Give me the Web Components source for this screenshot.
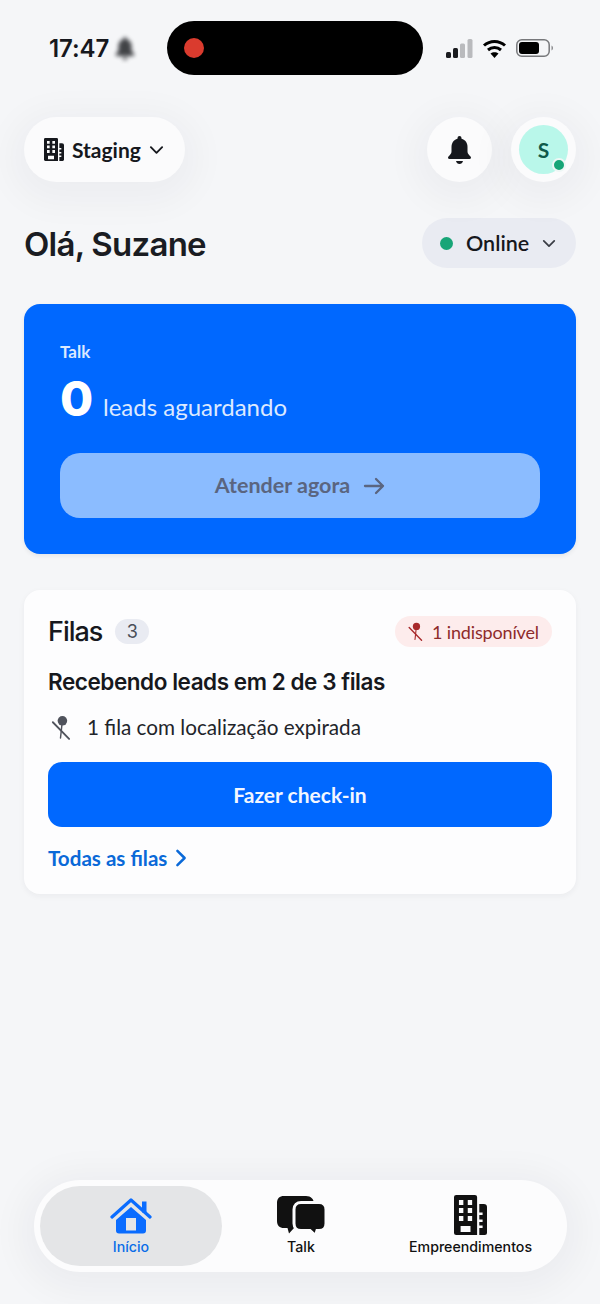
<!DOCTYPE html>
<html lang="pt-BR">
<head>
<meta charset="utf-8">
<title>Início</title>
<style>
  html, body { margin: 0; padding: 0; }
  body {
    width: 600px;
    height: 1304px;
    overflow: hidden;
    background: #f5f6f8;
    font-family: "Lato", "Liberation Sans", sans-serif;
    color: #16181d;
    display: flex;
    flex-direction: column;
  }
  bottom-nav { margin-top: auto; }
</style>
</head>
<body>
<status-bar></status-bar>
<top-bar></top-bar>
<greeting-row></greeting-row>
<talk-card></talk-card>
<queue-card></queue-card>
<bottom-nav></bottom-nav>

<script>
const ICONS = {
  building: `<svg viewBox="0 0 30 40" width="100%" height="100%" preserveAspectRatio="none"><path fill="currentColor" fill-rule="evenodd" d="M2 0h17a2 2 0 0 1 2 2v38H2a2 2 0 0 1-2-2V2a2 2 0 0 1 2-2zM4.500 5v5h4V5zm8 0v5h4V5zm-8 8v5h4v-5zm8 0v5h4v-5zm-8 8v5h4v-5zm8 0v5h4v-5zM6 31v6h9v-6zM23 9h4a3 3 0 0 1 3 3v26a2 2 0 0 1-2 2h-5v-7h3v-2.500h-3V27h3v-2.500h-3V20h3v-2.500h-3z"/></svg>`,
  chevron: `<svg viewBox="0 0 16 10" width="100%" height="100%"><path fill="none" stroke="currentColor" stroke-width="2" stroke-linecap="round" stroke-linejoin="round" d="M2 2l6 6 6-6"/></svg>`,
  bell: `<svg viewBox="0 0 24 28" width="100%" height="100%"><path fill="currentColor" d="M12 0a2 2 0 0 1 2 2v.700C18 3.700 20 7 20 11v4.500c0 2 1.300 3.300 3 5 .9.900.6 2.500-1 2.500H2c-1.600 0-1.900-1.600-1-2.500 1.700-1.700 3-3 3-5V11c0-4 2-7.300 6-8.300V2a2 2 0 0 1 2-2zM8.500 25h7c-.4 1.800-1.800 3-3.500 3s-3.100-1.200-3.500-3z"/></svg>`,
  arrow: `<svg viewBox="0 0 22 18" width="100%" height="100%"><path fill="none" stroke="currentColor" stroke-width="2.300" stroke-linecap="round" stroke-linejoin="round" d="M2 9h18M13 2l7 7-7 7"/></svg>`,
  pinOff: `<svg viewBox="0 0 22 26" width="100%" height="100%"><circle cx="13" cy="6" r="5" fill="currentColor"/><path fill="none" stroke="currentColor" stroke-width="1.500" stroke-linecap="round" d="M12.500 10 11 24"/><path fill="none" stroke="currentColor" stroke-width="1.900" stroke-linecap="round" d="M3 7.500 20 25"/></svg>`,
  chevronRight: `<svg viewBox="0 0 12 20" width="100%" height="100%"><path fill="none" stroke="currentColor" stroke-width="2.800" stroke-linecap="round" stroke-linejoin="round" d="M2 2l8 8-8 8"/></svg>`,
  home: `<svg viewBox="0 0 42 36" width="100%" height="100%"><path fill="currentColor" fill-rule="evenodd" d="M21 9 36 22v10.500a3 3 0 0 1-3 3H9a3 3 0 0 1-3-3V22zM16 20v12.500h10V20z"/><path fill="none" stroke="currentColor" stroke-width="3.200" stroke-linecap="round" stroke-linejoin="round" d="M2 19 21 2l19 17"/><path fill="currentColor" d="M32 3.500h4.500v11H32z"/></svg>`,
  chat: `<svg viewBox="0 0 50 40" width="100%" height="100%"><path fill="currentColor" d="M8 1h22c5 0 8 3 8 8v18c0 4-3 6-8 6H18l-5 5.500-1.500-5.500H8c-4.500 0-7-2.500-7-7V8c0-4.500 2.500-7 7-7z"/><path fill="currentColor" stroke="#fcfcfd" stroke-width="3" d="M25 7.500h18c4 0 7 2.500 7 7v14c0 4.500-3 7-7 7h-2l-1.500 5-5.500-5H25c-4 0-7-2.500-7-7v-14c0-4.500 3-7 7-7z"/></svg>`
};

function define(name, css, html) {
  customElements.define(name, class extends HTMLElement {
    connectedCallback() {
      if (this.shadowRoot) return;
      this.attachShadow({ mode: 'open' }).innerHTML = `<style>${css}</style>${html}`;
    }
  });
}

// simple wrapper so icons size from the host box
customElements.define('app-icon', class extends HTMLElement {
  connectedCallback() {
    if (this.shadowRoot) return;
    const w = this.getAttribute('w') || 20, h = this.getAttribute('h') || 20;
    this.attachShadow({ mode: 'open' }).innerHTML = `
      <style>:host{display:block;flex:none;width:${w}px;height:${h}px;line-height:0}</style>
      ${ICONS[this.getAttribute('name')]}`;
  }
});

define('status-bar', `
  :host{display:flex;align-items:center;height:54px;margin-top:21px;padding:0 47px 0 49px;box-sizing:border-box;color:#16181d}
  .time{font:600 24px/1 "Inter",sans-serif;letter-spacing:-.1px;width:59px;padding-top:1px}
  .muted{margin-left:6px;width:22px;height:23px;color:#222428;filter:blur(2px);opacity:.85}
  .island{margin-left:31px;width:256px;height:54px;border-radius:27px;background:#000;display:flex;align-items:center;padding-left:17px;box-sizing:border-box}
  .rec{width:20px;height:20px;border-radius:50%;background:#da3b2e}
  .right{margin-left:auto;display:flex;align-items:center;gap:9px}
`, `
  <span class="time">17:47</span>
  <app-icon class="muted" name="bell" w="22" h="23"></app-icon>
  <div class="island"><div class="rec"></div></div>
  <div class="right">
    <svg width="27" height="19" viewBox="0 0 27 19"><rect x="0" y="13" width="5" height="6" rx="1.500" fill="#1b1c20"/><rect x="7" y="9" width="5" height="10" rx="1.500" fill="#1b1c20"/><rect x="14" y="4.500" width="5" height="14.500" rx="1.500" fill="#b9babd"/><rect x="21.500" y="0" width="5" height="19" rx="1.500" fill="#b9babd"/></svg>
    <svg width="25" height="19" viewBox="0 0 25 19"><g fill="none" stroke="#000" stroke-width="3"><path d="M2 6.500c6-5.500 15-5.500 21 0"/><path d="M6 11c3.800-3.300 9.200-3.300 13 0"/></g><path d="M12.500 19l-4-4.500c2.300-1.800 5.700-1.800 8 0z"/></svg>
    <svg width="37" height="18" viewBox="0 0 37 18"><rect x=".8" y=".8" width="32.400" height="16.400" rx="5" fill="none" stroke="#77787b" stroke-width="1.500"/><rect x="3" y="3" width="20" height="12" rx="3" fill="#000"/><path d="M35.500 6.500c1 .6 1.500 1.500 1.500 2.500s-.5 1.900-1.500 2.500z" fill="#8a8b8e"/></svg>
  </div>
`);

define('top-bar', `
  :host{display:flex;align-items:center;margin-top:42px;padding:0 24px;height:65px}
  .glow{box-shadow:0 8px 34px 14px rgba(30,34,50,.035);background:#fbfbfc}
  .org{display:flex;align-items:center;width:161px;height:65px;border-radius:33px;box-sizing:border-box;padding-left:20px;color:#16181d}
  .org span{font:700 21px/1 "Lato",sans-serif;margin-left:8px}
  .org app-icon:last-child{margin-left:8px}
  .spacer{flex:1}
  .round{width:65px;height:65px;border-radius:50%;display:flex;align-items:center;justify-content:center;position:relative}
  .round + .round{margin-left:19px}
  .avatar{width:49px;height:49px;border-radius:50%;background:#b9f7ea;color:#0f5a4b;display:flex;align-items:center;justify-content:center;font:700 21px/1 "Lato",sans-serif}
  .dot{position:absolute;right:10px;bottom:10px;width:10px;height:10px;border-radius:50%;background:#17a577;border:2px solid #eef7f5}
`, `
  <div class="org glow"><app-icon name="building" w="20" h="23"></app-icon><span>Staging</span><app-icon name="chevron" w="15" h="10"></app-icon></div>
  <div class="spacer"></div>
  <div class="round glow"><app-icon name="bell" w="25" h="28"></app-icon></div>
  <div class="round glow"><div class="avatar">S</div><div class="dot"></div></div>
`);

define('greeting-row', `
  :host{display:flex;align-items:center;justify-content:space-between;margin-top:36px;padding:0 24px;height:50px}
  h1{margin:2px 0 0;font:600 33px/1 "Inter",sans-serif;letter-spacing:-.75px;color:#1a1c22}
  .status{display:flex;align-items:center;width:154px;height:50px;border-radius:25px;background:#e9ebf2;box-sizing:border-box;padding-left:18px}
  .dot{width:13px;height:13px;border-radius:50%;background:#17a577}
  .status span{font:600 21.500px/1 "Lato",sans-serif;margin:1px 0 0 13px;color:#16181d}
  .status app-icon{margin-left:auto;margin-right:20px;color:#3a3d45}
`, `
  <h1>Olá, Suzane</h1>
  <div class="status"><div class="dot"></div><span>Online</span><app-icon name="chevron" w="14" h="9"></app-icon></div>
`);

define('talk-card', `
  :host{display:block;margin:36px 24px 0;height:250px;box-sizing:border-box;padding:35px 36px 0;background:#0068ff;border-radius:16px;color:#fff;box-shadow:0 2px 4px rgba(30,34,50,.08)}
  .label{font:700 17px/1 "Lato",sans-serif;color:#dbe9ff;height:24px;display:flex;align-items:center}
  .count{display:flex;align-items:baseline;margin-top:9px;height:54px}
  .count b{font:800 48px/54px "Inter",sans-serif;width:43px}
  .count span{font:400 24px/1 "Lato",sans-serif;color:#dce9ff}
  .cta{margin-top:27px;height:65px;border-radius:20px;background:#8bbcff;color:#5a6580;display:flex;align-items:center;justify-content:center;gap:13px;font:700 21.500px/1 "Lato",sans-serif}
`, `
  <div class="label">Talk</div>
  <div class="count"><b>0</b><span>leads aguardando</span></div>
  <div class="cta">Atender agora <app-icon name="arrow" w="22" h="18"></app-icon></div>
`);

define('queue-card', `
  :host{display:block;margin:36px 24px 0;height:304px;box-sizing:border-box;padding:25px 24px 0;background:#fdfdfe;border-radius:16px;box-shadow:0 2px 6px rgba(30,34,50,.05)}
  .head{display:flex;align-items:center;height:33px}
  h2{margin:0;font:500 27px/1 "Inter",sans-serif;letter-spacing:-1px;color:#16181d}
  .chip{margin-left:13px;width:34px;height:25px;border-radius:13px;background:#e9ebf2;color:#4a4e58;display:flex;align-items:center;justify-content:center;font:400 18px/1 "Inter",sans-serif}
  .badge{margin-left:auto;display:flex;align-items:center;gap:9px;height:31px;width:157px;box-sizing:border-box;padding-left:12px;border-radius:16px;background:#fdecec;color:#8e2b2b;font:400 18px/1 "Lato",sans-serif;letter-spacing:-.15px;white-space:nowrap}
  .badge app-icon{color:#a8292b}
  h3{margin:20px 0 0;font:600 22.500px/28px "Inter",sans-serif;letter-spacing:-.45px;color:#16181d}
  .note{display:flex;align-items:center;margin-top:16px;height:30px;font:400 20.700px/1 "Lato",sans-serif;color:#22242a}
  .note app-icon{margin-left:2px;margin-right:16px;color:#50535c}
  .checkin{margin-top:20px;height:65px;border-radius:14px;background:#0068ff;color:#f3f7ff;display:flex;align-items:center;justify-content:center;font:700 21px/1 "Lato",sans-serif}
  .all{display:flex;align-items:center;gap:8px;margin-top:20px;height:22px;color:#0a69d8;font:700 20.600px/1 "Lato",sans-serif}
`, `
  <div class="head"><h2>Filas</h2><div class="chip">3</div><div class="badge"><app-icon name="pinOff" w="16" h="19"></app-icon>1 indisponível</div></div>
  <h3>Recebendo leads em 2 de 3 filas</h3>
  <div class="note"><app-icon name="pinOff" w="21" h="25"></app-icon>1 fila com localização expirada</div>
  <div class="checkin">Fazer check-in</div>
  <div class="all">Todas as filas <app-icon name="chevronRight" w="12" h="18"></app-icon></div>
`);

define('bottom-nav', `
  :host{display:flex;align-items:stretch;margin:0 33px 32px 34px;height:92px;box-sizing:border-box;padding:6px;border-radius:46px;background:#fcfcfd;box-shadow:0 6px 34px 14px rgba(30,34,50,.04)}
  .tab{display:flex;flex-direction:column;align-items:center;justify-content:flex-end;padding-bottom:11px;box-sizing:border-box;color:#111;font:500 14.200px/16px "Inter",sans-serif}
  .tab span{margin-top:4px}
  .home{width:182px;border-radius:40px;background:#e4e5e7;color:#0a6de8}
  .home app-icon{color:#0a6cff;margin-bottom:1px}
  .talk{width:158px}
  .emp{flex:1;white-space:nowrap}
`, `
  <div class="tab home"><app-icon name="home" w="42" h="36"></app-icon><span>Início</span></div>
  <div class="tab talk"><app-icon name="chat" w="50" h="40"></app-icon><span>Talk</span></div>
  <div class="tab emp"><app-icon name="building" w="33" h="40"></app-icon><span>Empreendimentos</span></div>
`);
</script>
</body>
</html>
